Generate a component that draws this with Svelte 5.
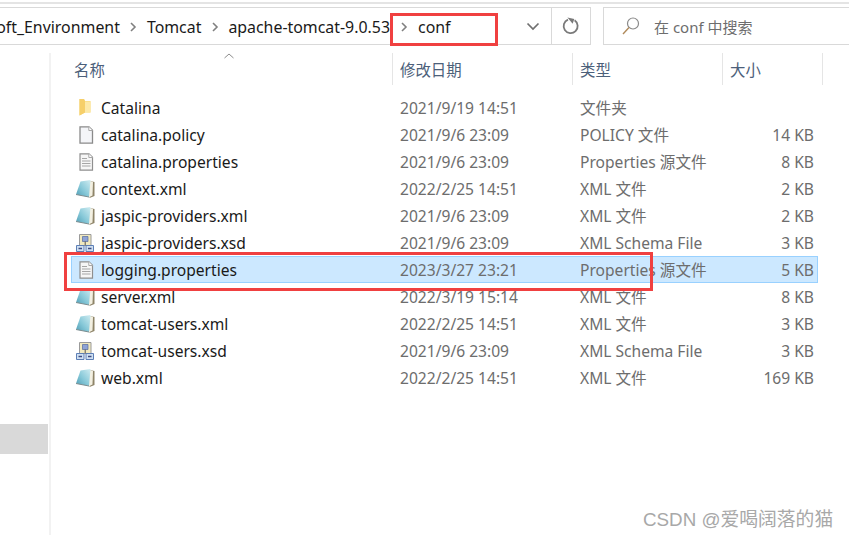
<script>
  const files = [
    { name: 'Catalina', date: '2021/9/19 14:51', type: '文件夹', size: '', icon: 'folder' },
    { name: 'catalina.policy', date: '2021/9/6 23:09', type: 'POLICY 文件', size: '14 KB', icon: 'blank' },
    { name: 'catalina.properties', date: '2021/9/6 23:09', type: 'Properties 源文件', size: '8 KB', icon: 'text' },
    { name: 'context.xml', date: '2022/2/25 14:51', type: 'XML 文件', size: '2 KB', icon: 'xml' },
    { name: 'jaspic-providers.xml', date: '2021/9/6 23:09', type: 'XML 文件', size: '2 KB', icon: 'xml' },
    { name: 'jaspic-providers.xsd', date: '2021/9/6 23:09', type: 'XML Schema File', size: '3 KB', icon: 'xsd' },
    { name: 'logging.properties', date: '2023/3/27 23:21', type: 'Properties 源文件', size: '5 KB', icon: 'text', selected: true },
    { name: 'server.xml', date: '2022/3/19 15:14', type: 'XML 文件', size: '8 KB', icon: 'xml' },
    { name: 'tomcat-users.xml', date: '2022/2/25 14:51', type: 'XML 文件', size: '3 KB', icon: 'xml' },
    { name: 'tomcat-users.xsd', date: '2021/9/6 23:09', type: 'XML Schema File', size: '3 KB', icon: 'xsd' },
    { name: 'web.xml', date: '2022/2/25 14:51', type: 'XML 文件', size: '169 KB', icon: 'xml' }
  ];
  const crumbs = ['soft_Environment', 'Tomcat', 'apache-tomcat-9.0.53', 'conf'];
</script>

{#snippet chevron()}
  <svg class="chev" width="8" height="10" viewBox="0 0 8 10"><path d="M2 1l4 4-4 4" fill="none" stroke="#808080" stroke-width="1.6" /></svg>
{/snippet}

{#snippet fileIcon(kind)}
  <svg class="icon" width="20" height="20" viewBox="0 0 20 20">
    {#if kind === 'folder'}
      <path d="M4.500 1h4.500l1 2h5.500v11.500H10l-5.500 3z" fill="#f8d775" />
      <path d="M10 3.500h5.500v11H10z" fill="#fde9a8" />
      <path d="M4.500 1l4.500 0 1 2.500v11l-5.500 3z" fill="#f6cf6a" />
    {:else if kind === 'blank'}
      <path d="M5 1.800h9l3.500 3.500v12.900H5z" fill="#f4f5f8" stroke="#8a8a8a" stroke-width="1.300" />
      <path d="M13.800 1.800v3.700h3.700" fill="#fff" stroke="#a8a8a8" />
    {:else if kind === 'text'}
      <path d="M5 1.800h9l3.500 3.500v12.900H5z" fill="#f6f6f6" stroke="#8f8f8f" stroke-width="1.200" />
      <path d="M13.800 1.800v3.700h3.700" fill="#fff" stroke="#a8a8a8" />
      <path d="M7 6.500h5M7 9h8.500M7 11.500h8.500M7 14h8.500" stroke="#a6a6a6" stroke-width="1.200" fill="none" />
    {:else if kind === 'xml'}
      <defs>
        <linearGradient id="pad" x1="1" y1="0" x2="0" y2="1">
          <stop offset="0" stop-color="#cfecf1" />
          <stop offset="0.55" stop-color="#86c8d8" />
          <stop offset="1" stop-color="#4f9db5" />
        </linearGradient>
      </defs>
      <path d="M15 2l4.500 1v14l-5 2z" fill="#8e8468" />
      <path d="M15 2l3 1-.5 13.500-4 2z" fill="#f3f0e2" />
      <path d="M5.500 2.500L15.500 1l-1.500 17L1 15.500z" fill="url(#pad)" />
      <path d="M1 15.500L14 18" stroke="#7d8d90" stroke-width="1" />
    {:else}
      <path d="M4.500 1.500h11.500v11H4.500z" fill="#f1e9bf" stroke="#9a9a9a" />
      <path d="M7.500 3.500h5.500v5H7.500z" fill="#8ea3d6" stroke="#556a9e" stroke-width=".7" />
      <path d="M10.200 8.500v4" stroke="#555" />
      <path d="M1.500 12.500h7.500v6H1.500zM11 12.500h7.500v6H11z" fill="#cfe0f2" stroke="#5d7fb6" />
      <path d="M3.500 15.500h3.500M13 15.500h3.500" stroke="#3e4a80" stroke-width="1.400" fill="none" />
    {/if}
  </svg>
{/snippet}

<div class="window">
  <div class="topline"></div>

  <div class="toolbar">
    <div class="address">
      <div class="crumbs">
        {#each crumbs as crumb, i}
          <span class="crumb">{crumb}</span>
          {#if i < crumbs.length - 1}{@render chevron()}{/if}
        {/each}
      </div>
      <div class="history">
        <svg width="14" height="9" viewBox="0 0 14 9"><path d="M1.500 1.500L7 7l5.500-5.500" fill="none" stroke="#707070" stroke-width="1.700" /></svg>
      </div>
      <div class="refresh">
        <svg width="18" height="18" viewBox="0 0 18 18"><path d="M12.600 3.300A7 7 0 1 1 6 2.600" fill="none" stroke="#7a7a7a" stroke-width="1.800" /><path d="M5 1l7 0.500-1 5z" fill="#7a7a7a" transform="rotate(8 9 4)" /></svg>
      </div>
    </div>
    <div class="search">
      <svg width="20" height="20" viewBox="0 0 20 20"><circle cx="12" cy="7.500" r="5.500" fill="none" stroke="#8a8a8a" stroke-width="1.200" /><path d="M8 11.500L2 18" stroke="#b08a5a" stroke-width="1.400" /></svg>
      <span>在 conf 中搜索</span>
    </div>
  </div>

  <div class="body">
    <aside class="sidebar">
      <div class="nav-active"></div>
    </aside>
    <section class="list">
      <div class="head">
        <svg class="sort" width="10" height="6" viewBox="0 0 10 6"><path d="M.5 5L5 1l4.500 4" fill="none" stroke="#8c8c8c" /></svg>
        <div class="hcell name">名称</div>
        <div class="hcell">修改日期</div>
        <div class="hcell">类型</div>
        <div class="hcell">大小</div>
      </div>
      <div class="rows">
        {#each files as f}
          <div class="row" class:selected={f.selected}>
            <div class="cell name">{@render fileIcon(f.icon)}<span>{f.name}</span></div>
            <div class="cell meta">{f.date}</div>
            <div class="cell meta">{f.type}</div>
            <div class="cell meta size">{f.size}</div>
          </div>
        {/each}
      </div>
    </section>
  </div>

  <div class="mark mark-conf"></div>
  <div class="mark mark-row"></div>
  <div class="watermark">CSDN @爱喝阔落的猫</div>
</div>

<style>
  :global(body) {
    margin: 0;
    background: #fff;
  }

  .window {
    position: relative;
    width: 849px;
    height: 536px;
    overflow: hidden;
    background: #fff;
    font-family: "Noto Sans", "Noto Sans CJK SC", sans-serif;
    font-size: 15.4px;
    color: #1a1a1a;
  }

  .topline {
    height: 2px;
    margin-top: 2px;
    background: #e4e4e4;
  }

  .toolbar {
    display: flex;
    gap: 12px;
    height: 38px;
    margin-top: 3px;
  }

  .address {
    display: flex;
    width: 591px;
    border: 1px solid #d9d9d9;
    border-left: 0;
    box-sizing: border-box;
  }

  .crumbs {
    flex: 1;
    min-width: 0;
    display: flex;
    align-items: center;
    justify-content: flex-end;
    gap: 9.5px;
    overflow: hidden;
    white-space: nowrap;
    font-size: 15.9px;
    padding-top: 1px;
  }

  .crumb {
    flex: none;
  }

  .chev {
    flex: none;
  }

  .crumb:last-child {
    width: 96px;
    margin-left: 1px;
  }

  .history {
    width: 37px;
    flex: none;
    display: flex;
    align-items: center;
    justify-content: center;
  }

  .refresh {
    width: 38px;
    flex: none;
    border-left: 1px solid #d9d9d9;
    display: flex;
    align-items: center;
    justify-content: center;
  }

  .search {
    flex: 1;
    display: flex;
    align-items: center;
    gap: 13px;
    padding-left: 17px;
    border: 1px solid #d9d9d9;
    border-right: 0;
    color: #6d6d6d;
    font-size: 15px;
  }

  .body {
    display: flex;
    height: 490px;
  }

  .sidebar {
    width: 51px;
    margin-top: 8px;
    padding-top: 371px;
    box-sizing: border-box;
    border-right: 2px solid #f2f2f2;
  }

  .nav-active {
    width: 48px;
    height: 30px;
    background: #d9d9d9;
  }

  .list {
    flex: 1;
    padding-left: 20px;
  }

  .head {
    position: relative;
    display: grid;
    grid-template-columns: 322px 180px 150px 100px;
    height: 32px;
    margin-top: 8px;
    color: #4c607a;
  }

  .sort {
    position: absolute;
    left: 153px;
    top: 0;
  }

  .hcell {
    display: flex;
    align-items: center;
    padding-left: 7px;
    border-right: 1px solid #e5e5e5;
  }

  .hcell.name {
    padding-left: 3px;
  }

  .rows {
    margin-top: 9px;
    width: 747px;
  }

  .row {
    display: grid;
    grid-template-columns: 321px 180px 150px 1fr;
    height: 27px;
    box-sizing: border-box;
    align-items: center;
    font-size: 15.6px;
  }

  .row.selected {
    background: #cce8ff;
    outline: 1px solid #99d1ff;
    outline-offset: -1px;
  }

  .cell {
    display: flex;
    align-items: center;
    white-space: nowrap;
  }

  .cell.name {
    gap: 6px;
    padding-left: 4px;
  }

  .icon {
    flex: none;
  }

  .meta {
    padding-left: 8px;
    color: #6d6d6d;
  }

  .size {
    justify-content: flex-end;
    padding-right: 4px;
  }

  .mark {
    position: absolute;
    border: 3px solid #f04040;
    box-sizing: border-box;
  }

  .mark-conf {
    left: 390px;
    top: 13px;
    width: 108px;
    height: 33px;
  }

  .mark-row {
    left: 64px;
    top: 252px;
    width: 589px;
    height: 39px;
  }

  .watermark {
    position: absolute;
    left: 643px;
    top: 504px;
    font-family: "Liberation Sans", "Noto Sans CJK SC", sans-serif;
    font-size: 18.8px;
    color: #a8a8a8;
  }
</style>
